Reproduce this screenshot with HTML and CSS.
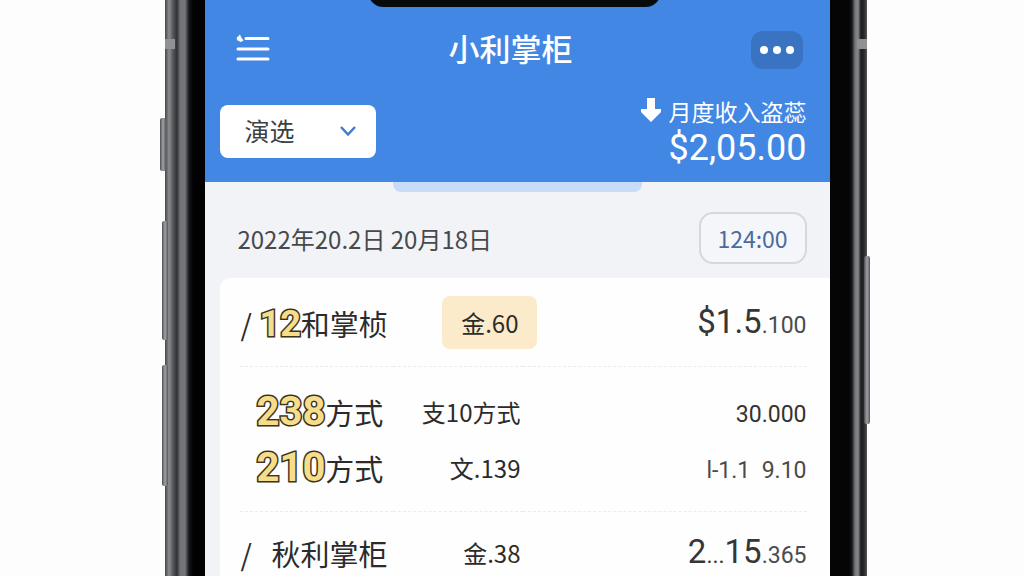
FILE: index.html
```
<!DOCTYPE html>
<html lang="zh-CN">

<head>
    <meta charset="UTF-8">
    <meta name="viewport" content="width=device-width, initial-scale=1.0">
    <title>小利掌柜</title>
    <link rel="stylesheet" href="styles.css">
</head>

<body>
    <div class="stage">
        <div class="phone">
            <!-- Side buttons -->
            <span class="key key-mute"></span>
            <span class="key key-up"></span>
            <span class="key key-down"></span>
            <span class="key key-power"></span>
            <span class="band band-left"></span>
            <span class="band band-right"></span>

            <main class="screen">
                <span class="notch"></span>

                <header class="header">
                    <div class="topbar">
                        <button class="menu-button" type="button" aria-label="菜单">
                            <svg width="34" height="28" viewBox="0 0 34 28">
                                <path d="M10 4.500H32M2 15H32M2 25H32" fill="none" stroke="#fff" stroke-width="3" stroke-linecap="round" />
                                <path d="M0.500 4L4 0.500L5 3L7.500 6.500L5 8L1.500 6.500Z" fill="#fff" />
                            </svg>
                        </button>
                        <h1>小利掌柜</h1>
                        <button class="more-button" type="button" aria-label="更多">
                            <svg width="34" height="8" viewBox="0 0 34 8" fill="#fff">
                                <circle cx="4" cy="4" r="4" />
                                <circle cx="17" cy="4" r="4" />
                                <circle cx="30" cy="4" r="4" />
                            </svg>
                        </button>
                    </div>

                    <div class="overview">
                        <div class="filter">
                            <select aria-label="筛选">
                                <option>演选</option>
                            </select>
                            <svg class="chevron" width="18" height="12" viewBox="0 0 18 12">
                                <path d="M2 2L9 9.500L16 2" fill="none" stroke="#3f7cc9" stroke-width="2.500" />
                            </svg>
                        </div>
                        <div class="income">
                            <div class="income-label">
                                <svg width="20" height="26" viewBox="0 0 20 26">
                                    <path d="M6 0H14V11H20V14L10 24L0 14V11H6Z" fill="#fff" />
                                </svg>
                                <span>月度收入盗蕊</span>
                            </div>
                            <div class="income-value">$2,05.00</div>
                        </div>
                    </div>
                </header>

                <div class="handle"></div>

                <div class="date-row">
                    <span>2022年20.2日 20月18日</span>
                    <button class="time-button" type="button">124:00</button>
                </div>

                <section class="card">
                    <table class="records">
                        <tbody>
                            <tr>
                                <th scope="row"><span class="slash">/</span><b class="gold gold-small">12</b>和掌桢</th>
                                <td class="method"><span class="tag">金.60</span></td>
                                <td class="amount"><span class="big">$1.5</span>.100</td>
                            </tr>
                        </tbody>
                        <tbody class="pair">
                            <tr>
                                <th scope="row" class="indent"><b class="gold">238</b>方式</th>
                                <td class="method">支10方式</td>
                                <td class="amount dark">30.000</td>
                            </tr>
                            <tr>
                                <th scope="row" class="indent"><b class="gold">210</b>方式</th>
                                <td class="method">文.139</td>
                                <td class="amount">l-1.1&nbsp; 9.10</td>
                            </tr>
                        </tbody>
                        <tbody>
                            <tr>
                                <th scope="row"><span class="slash slash-wide">/</span>秋利掌柜</th>
                                <td class="method">金.38</td>
                                <td class="amount"><span class="big">2<small>...</small>15</span>.365</td>
                            </tr>
                        </tbody>
                    </table>
                </section>
            </main>
        </div>
    </div>
</body>

</html>
```

FILE: styles.css
```
/* General styling */
* {
    box-sizing: border-box;
}

body {
    margin: 0;
    background-color: #fdfdfd;
    font-family: 'Noto Sans CJK SC', sans-serif;
    color: #2b2b2b;
}

button,
select {
    font-family: inherit;
    border: none;
    cursor: pointer;
}

svg {
    display: block;
}

.stage {
    display: flex;
    justify-content: center;
    height: 100vh;
    padding-left: 8px;
    overflow: hidden;
}

/* Phone body: metal rim drawn with gradients, black bezel inside */
.phone {
    position: relative;
    width: 69%;
    padding: 0 37px 0 40px;
    background:
        linear-gradient(90deg, #44464a 0, #8b8d90 4px, #55575a 8px, #303134 12px, #6f7276 15px, #74777b 20px, #17181a 24px, #020203 28px, #020203 100%) left / 40px 100% no-repeat,
        linear-gradient(270deg, #555 0, #28292b 3px, #1c1d1f 6px, #88898b 9px, #77787b 12px, #17181a 15px, #050506 18px, #050506 100%) right / 40px 100% no-repeat,
        #050506;
}

.key {
    position: absolute;
    width: 6px;
    background: linear-gradient(90deg, #4b4d50, #a1a2a4, #55575a);
    border-radius: 2px;
}

.key-mute {
    left: -5px;
    top: 118px;
    height: 53px;
}

.key-up {
    left: -3px;
    top: 221px;
    height: 119px;
}

.key-down {
    left: -3px;
    top: 365px;
    height: 121px;
}

.key-power {
    right: -3px;
    top: 256px;
    height: 168px;
}

.band {
    position: absolute;
    top: 39px;
    height: 10px;
    background-color: #8f9193;
}

.band-left {
    left: 0;
    width: 10px;
}

.band-right {
    right: 0;
    width: 10px;
}

.screen {
    position: relative;
    height: 100%;
    background-color: #f2f3f7;
    overflow: hidden;
}

.notch {
    position: absolute;
    top: -24px;
    left: 26%;
    width: 47%;
    height: 31px;
    background-color: #070b0c;
    border-radius: 24px;
}

/* Blue header */
.header {
    padding: 24px 23px 12px 15px;
    background-color: #4287e4;
    color: #fff;
}

.topbar {
    display: flex;
    justify-content: space-between;
    align-items: center;
    height: 52px;
    padding: 0 4px 0 16px;
}

h1 {
    margin: 0;
    padding-bottom: 4px;
    font-size: 31px;
    font-weight: 500;
    line-height: 48px;
}

.menu-button {
    padding: 0 0 4px;
    background: none;
}

.more-button {
    display: flex;
    align-items: center;
    justify-content: center;
    width: 52px;
    height: 38px;
    padding: 0;
    background-color: #3973c1;
    border-radius: 12px;
}

.overview {
    display: flex;
    justify-content: space-between;
    align-items: flex-end;
    padding-top: 20px;
}

.filter {
    position: relative;
    margin-bottom: 12px;
}

.filter select {
    display: block;
    width: 156px;
    height: 53px;
    padding: 0 24px 4px;
    appearance: none;
    background-color: #fff;
    border-radius: 8px;
    color: #3c3f44;
    font-size: 25px;
}

.chevron {
    position: absolute;
    top: 20px;
    right: 19px;
    pointer-events: none;
}

.income-label {
    display: flex;
    align-items: center;
    justify-content: flex-end;
    gap: 8px;
    font-size: 23px;
    line-height: 30px;
}

.income-value {
    font-family: Roboto, sans-serif;
    font-size: 36px;
    line-height: 44px;
    text-align: right;
}

.handle {
    width: 40%;
    height: 10px;
    margin: 0 auto;
    background-color: #c9dcf7;
    border-radius: 0 0 8px 8px;
}

/* Date and time */
.date-row {
    display: flex;
    justify-content: space-between;
    align-items: center;
    padding: 20px 23px 14px 32px;
    color: #48494c;
    font-size: 24px;
}

.time-button {
    width: 108px;
    height: 52px;
    padding: 0;
    background-color: #f5f6fa;
    border: 2px solid #d6d8de;
    border-radius: 14px;
    color: #4c6b9c;
    font-size: 23px;
}

/* Records */
.card {
    margin-left: 15px;
    padding: 4px 23px 0 20px;
    background-color: #fefefe;
    border-top-left-radius: 10px;
}

.records {
    width: 100%;
    border-collapse: collapse;
    table-layout: fixed;
}

.records tbody + tbody {
    border-top: 1px dashed #ececef;
}

.records th,
.records td {
    height: 56px;
    padding: 0;
    line-height: 56px;
    white-space: nowrap;
}

.records th {
    width: 27%;
    font-size: 29px;
    font-weight: 400;
    text-align: left;
}

.records tr:first-child > * {
    padding-top: 13px;
}

.records .pair tr:first-child > * {
    padding-top: 17px;
}

.records tr:last-child > * {
    padding-bottom: 15px;
}

.records .indent {
    padding-left: 16px;
}

.slash {
    display: inline-block;
    width: 19px;
}

.slash-wide {
    width: 31px;
}

.gold {
    font-family: Roboto, sans-serif;
    font-size: 40px;
    font-weight: 700;
    line-height: 40px;
    color: #f6dd8a;
    -webkit-text-stroke: 3px #3b3321;
    paint-order: stroke fill;
}

.gold-small {
    font-size: 36px;
}

.records .method {
    width: 23%;
    padding-right: 3px;
    font-size: 24px;
    text-align: right;
}

.tag {
    display: inline-block;
    margin-right: -17px;
    padding: 0 19px;
    background-color: #fcebcb;
    border-radius: 8px;
    line-height: 53px;
}

/* Amounts sit a little lower than the names beside them */
.records .amount {
    color: #4b4b4d;
    font-family: Roboto, sans-serif;
    font-size: 23px;
    line-height: 50px;
    text-align: right;
    vertical-align: bottom;
}

.records .dark {
    color: #333;
}

.big {
    color: #363638;
    font-size: 33px;
}

.big small {
    font-size: 23px;
}
```
